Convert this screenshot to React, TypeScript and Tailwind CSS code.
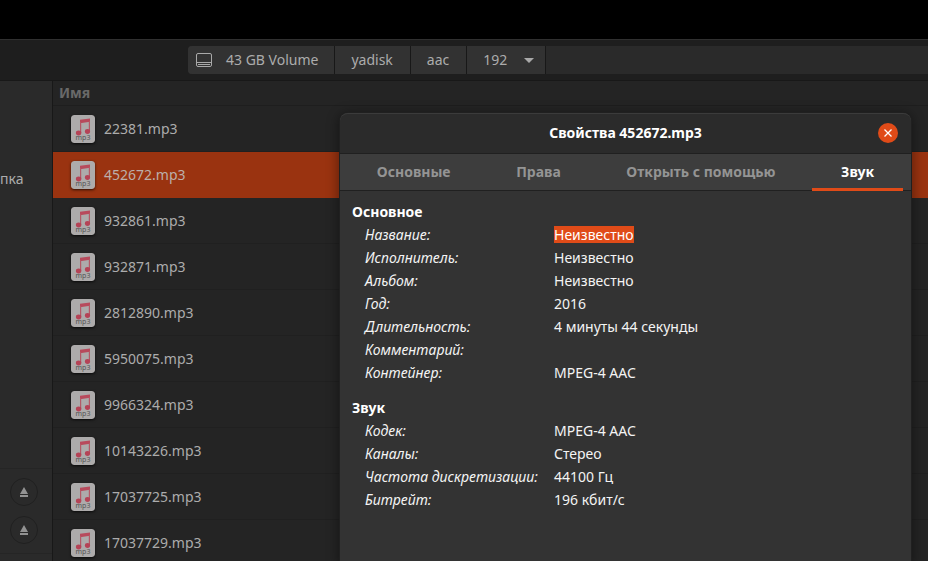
import { useState } from 'react'
import clsx from 'clsx'

interface InfoSection {
  title: string
  rows: { label: string; value: string; selected?: boolean }[]
}

const FILES = [
  '22381.mp3',
  '452672.mp3',
  '932861.mp3',
  '932871.mp3',
  '2812890.mp3',
  '5950075.mp3',
  '9966324.mp3',
  '10143226.mp3',
  '17037725.mp3',
  '17037729.mp3',
]

const TABS = ['Основные', 'Права', 'Открыть с помощью', 'Звук']

const SECTIONS: InfoSection[] = [
  {
    title: 'Основное',
    rows: [
      { label: 'Название:', value: 'Неизвестно', selected: true },
      { label: 'Исполнитель:', value: 'Неизвестно' },
      { label: 'Альбом:', value: 'Неизвестно' },
      { label: 'Год:', value: '2016' },
      { label: 'Длительность:', value: '4 минуты 44 секунды' },
      { label: 'Комментарий:', value: '' },
      { label: 'Контейнер:', value: 'MPEG-4 AAC' },
    ],
  },
  {
    title: 'Звук',
    rows: [
      { label: 'Кодек:', value: 'MPEG-4 AAC' },
      { label: 'Каналы:', value: 'Стерео' },
      { label: 'Частота дискретизации:', value: '44100 Гц' },
      { label: 'Битрейт:', value: '196 кбит/с' },
    ],
  },
]

function Mp3Icon() {
  return (
    <svg width="24" height="28" viewBox="0 0 24 28" className="shrink-0 rounded-[3px] shadow-sm shadow-black/60" aria-hidden="true">
      <rect width="24" height="28" rx="3" fill="#adabab" />
      <path d="M9 4.8 19 3.4v3.4L9 8.2z" fill="#b84a5c" />
      <path d="M9.6 7v11M18.4 6v10.5" stroke="#b35a67" strokeWidth="1.2" />
      <ellipse cx="7.6" cy="18" rx="2.7" ry="2.4" fill="#b54356" />
      <ellipse cx="16.5" cy="16.5" rx="2.6" ry="2.4" fill="#b54356" />
      <text x="12" y="25.4" textAnchor="middle" fontSize="7" fill="#555555">mp3</text>
    </svg>
  )
}

function DriveIcon() {
  return (
    <svg width="16" height="14" viewBox="0 0 16 14" fill="none" stroke="#a9a9a9" aria-hidden="true">
      <rect x="0.5" y="0.5" width="15" height="13" rx="1.5" />
      <path d="M1 9.5h14M2 11.5h12" />
    </svg>
  )
}

function EjectButton() {
  return (
    <button type="button" aria-label="Извлечь" className="flex size-7 items-center justify-center rounded-full border border-[#202020]">
      <svg width="8" height="10" viewBox="0 0 8 10" fill="#929292" aria-hidden="true">
        <path d="M4 0 8 7H0zM0 8h8v2H0z" />
      </svg>
    </button>
  )
}

function PropertiesDialog() {
  const [tab, setTab] = useState('Звук')

  return (
    <div
      role="dialog"
      aria-label="Свойства 452672.mp3"
      className="absolute top-[113px] right-[17px] bottom-0 left-[340px] flex flex-col rounded-t-lg bg-[#333333] text-[#f4f4f4] shadow-[0_2px_12px_2px_rgba(0,0,0,0.4)] ring-1 ring-[#202020]"
    >
      <div className="flex h-[41px] items-center rounded-t-lg border-t border-b border-t-[#3b3b3b] border-b-[#202020] bg-[#2b2b2b] px-[13px] pb-px">
        <span className="w-5" />
        <h1 className="flex-1 text-center font-bold text-white">Свойства 452672.mp3</h1>
        <button type="button" aria-label="Закрыть" className="flex size-5 items-center justify-center rounded-full bg-[#e04b18]">
          <svg width="8" height="8" viewBox="0 0 8 8" stroke="#fff" strokeWidth="1.3" aria-hidden="true">
            <path d="M0.5 0.5l7 7M7.5 0.5l-7 7" />
          </svg>
        </button>
      </div>

      <div role="tablist" className="flex h-[37px] gap-2 border-b border-[#202020] bg-[#3d3d3d] px-2">
        {TABS.map((t) => (
          <button
            key={t}
            type="button"
            role="tab"
            aria-selected={t === tab}
            onClick={() => setTab(t)}
            className={clsx(
              '-mb-px flex-auto border-b-3 px-6 pt-0.5 font-bold whitespace-nowrap',
              t === tab ? 'border-[#e04b18] text-white' : 'border-transparent text-[#949494]',
            )}
          >
            {t}
          </button>
        ))}
      </div>

      <div className="space-y-3 px-3 pt-[9px]">
        {SECTIONS.map((s) => (
          <table key={s.title} className="w-full table-fixed text-left">
            <caption className="h-[23px] text-left leading-[23px] font-bold text-white">{s.title}</caption>
            <colgroup>
              <col className="w-[202px]" />
              <col />
            </colgroup>
            <tbody>
              {s.rows.map((r) => (
                <tr key={r.label} className="h-[23px] leading-[23px]">
                  <th scope="row" className="pl-[13px] font-normal whitespace-nowrap italic">{r.label}</th>
                  <td>
                    <span className={clsx(r.selected && 'inline-block bg-[#e04b18] leading-[17px] text-white')}>{r.value}</span>
                  </td>
                </tr>
              ))}
            </tbody>
          </table>
        ))}
      </div>
    </div>
  )
}

export default function App() {
  const [selected, setSelected] = useState('452672.mp3')

  return (
    <div className="relative flex h-screen flex-col overflow-hidden bg-black pt-[39px] font-['Noto_Sans','Open_Sans',sans-serif] text-sm text-[#acacac]">
      {/* Path bar */}
      <header className="flex h-[42px] shrink-0 border-t border-b border-t-[#303030] border-b-[#181818] bg-[#1e1e1e] py-[6px] pl-[188px]">
        <nav className="flex flex-1 divide-x divide-[#181818] rounded-l bg-[#2a2a2a]">
          <button type="button" className="flex items-center gap-[14px] rounded-l bg-[#323232] pr-4 pl-2">
            <DriveIcon />
            43 GB Volume
          </button>
          <button type="button" className="bg-[#323232] pr-[17px] pl-4">yadisk</button>
          <button type="button" className="bg-[#323232] pr-[17px] pl-4">aac</button>
          <button type="button" className="flex items-center gap-[17px] bg-[#323232] pr-[11px] pl-4">
            192
            <svg width="10" height="5" viewBox="0 0 10 5" fill="#a9a9a9" aria-hidden="true">
              <path d="M0 0h10L5 5z" />
            </svg>
          </button>
          <span className="flex-1" />
        </nav>
      </header>

      <div className="flex min-h-0 flex-1">
        {/* Sidebar */}
        <aside className="flex w-[53px] shrink-0 flex-col border-r border-[#181818] bg-[#2a2a2a]">
          <div className="flex h-[388px] shrink-0 flex-col border-b border-[#252525] pt-[87px]">
            <a href="#home" className="leading-[22px]">пка</a>
          </div>
          <div className="flex h-[85px] shrink-0 flex-col items-center gap-[10px] border-b border-[#252525] pt-[9px] pr-1">
            <EjectButton />
            <EjectButton />
          </div>
        </aside>

        {/* File list */}
        <main className="flex-1 overflow-hidden bg-[#242424]">
          <table className="w-full border-separate border-spacing-0">
            <thead>
              <tr>
                <th scope="col" className="h-[25px] border-b border-[#1e1e1e] pl-[6px] text-left leading-6 font-bold text-[#696969]">
                  Имя
                </th>
              </tr>
            </thead>
            <tbody>
              {FILES.map((name) => (
                <tr key={name} onClick={() => setSelected(name)}>
                  <td
                    className={clsx(
                      'h-[46px] border-b pl-[18px]',
                      name === selected ? 'border-[#9a3310] bg-[#9a3310] text-[#bcafaa]' : 'border-[#202020]',
                    )}
                  >
                    <div className="flex items-center gap-[9px]">
                      <Mp3Icon />
                      {name}
                    </div>
                  </td>
                </tr>
              ))}
            </tbody>
          </table>
        </main>
      </div>

      <PropertiesDialog />
    </div>
  )
}
